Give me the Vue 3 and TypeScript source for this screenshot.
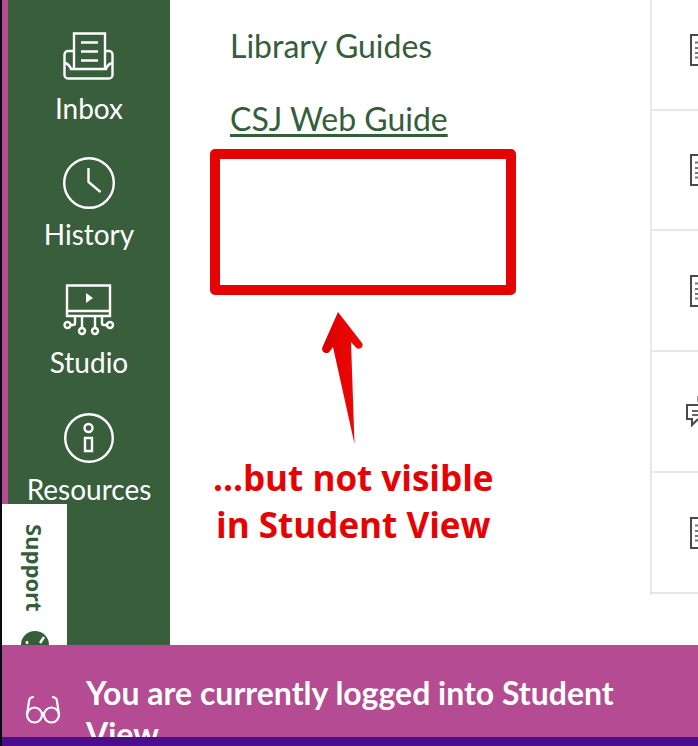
<script setup lang="ts">
const rows = ['doc', 'doc', 'doc', 'chat', 'doc']
</script>

<template>
  <div class="page">
    <div class="main">
      <div class="accent"></div>
      <nav class="nav">
        <a class="nav-item inbox">
          <svg width="52" height="48" viewBox="0 0 52 48" fill="none" stroke="#fff" stroke-width="2.4">
            <path d="M10 19H5a3.500 3.500 0 0 0-3.500 3.500V43A3.500 3.500 0 0 0 5 46.500h41a3.500 3.500 0 0 0 3.500-3.500V22.500A3.500 3.500 0 0 0 46 19h-4" />
            <path d="M2 31c3 1 5 3 6 6h35c1-3 3-5 6-6" />
            <path d="M11 37V1.500h31V37" />
            <path d="M18 10.500h17M18 19.500h17M18 28.500h17" />
          </svg>
          <span>Inbox</span>
        </a>
        <a class="nav-item history">
          <svg width="52" height="52" viewBox="0 0 52 52" fill="none" stroke="#fff" stroke-width="2.4">
            <circle cx="26" cy="26" r="24.800" />
            <path d="M25.500 11v14l12 10" />
          </svg>
          <span>History</span>
        </a>
        <a class="nav-item studio">
          <svg width="52" height="52" viewBox="0 0 52 52" fill="none" stroke="#fff" stroke-width="2.4">
            <path d="M4 1.500h43V32H4zM4 27h43" />
            <path d="M23 9l7 5-7 5z" fill="#fff" stroke="none" />
            <path d="M12 32v7a2 2 0 0 1-2 2H8M19 32v11M32 32v11M39 32v7a2 2 0 0 0 2 2h3" />
            <circle cx="4.500" cy="41" r="3" />
            <circle cx="19" cy="47" r="3" />
            <circle cx="32" cy="47" r="3" />
            <circle cx="47" cy="41" r="3" />
          </svg>
          <span>Studio</span>
        </a>
        <a class="nav-item resources">
          <svg width="50" height="50" viewBox="0 0 50 50" fill="none" stroke="#fff" stroke-width="2.4">
            <circle cx="25" cy="25" r="23.800" />
            <circle cx="24.500" cy="15" r="4" />
            <path d="M21 25h7v13h-7z" />
          </svg>
          <span>Resources</span>
        </a>
      </nav>
      <section class="content">
        <a class="guide-title">Library Guides</a>
        <a class="guide-link">CSJ Web Guide</a>
        <div class="red-box"></div>
        <svg class="arrow" width="46" height="134" viewBox="0 0 46 134">
          <defs>
            <linearGradient id="arrow-fill" x1="0" x2="1" y1="0" y2="0">
              <stop offset="0" stop-color="#d90000" />
              <stop offset="1" stop-color="#f20808" />
            </linearGradient>
          </defs>
          <path d="M18 2L42 33a4 4 0 0 1-1 5 4 4 0 0 1-5-.500L31 32 34.500 134 13 37 10 41a4 4 0 0 1-5.500 1.500A4 4 0 0 1 2.500 37z" fill="url(#arrow-fill)" />
        </svg>
        <p class="note">...but not visible<br />in Student View</p>
      </section>
      <aside class="list">
        <div v-for="(row, i) in rows" :key="i" class="list-row">
          <svg v-if="row === 'doc'" width="8" height="32" viewBox="0 0 8 32" fill="none">
            <path d="M8 1H1v30h7" stroke="#4a4a4a" stroke-width="2" />
            <path d="M5 8.500h3M5 14h3M5 19h3M5 23.500h3" stroke="#777" stroke-width="2" />
          </svg>
          <svg v-else width="12" height="32" viewBox="0 0 12 32" fill="none">
            <path d="M11.500 0v6" stroke="#999" />
            <path d="M12 9H1v14h5v6l6-6" stroke="#4a4a4a" stroke-width="2" />
            <path d="M6 15h6M6 19h6" stroke="#666" stroke-width="2" />
          </svg>
        </div>
      </aside>
      <div class="support">
        <span class="support-text">Support</span>
        <span class="support-icon">
          <svg width="28" height="14" viewBox="0 0 28 14" fill="none" stroke="#fff" stroke-width="2.500">
            <path d="M6 13v-3M19 12l4-6" />
          </svg>
        </span>
      </div>
    </div>
    <footer class="banner">
      <svg class="glasses" width="36" height="30" viewBox="0 0 36 30" fill="none" stroke="#fff" stroke-width="2.2">
        <circle cx="9.500" cy="20" r="7.500" />
        <circle cx="26.500" cy="20" r="7.500" />
        <path d="M17 19c.5-1 1.500-1 2 0" />
        <path d="M2 20L4 6c.3-2.500 2-4 5-4M34 20L32 6c-.3-2.500-2-4-5-4" />
      </svg>
      <p class="banner-text">You are currently logged into Student View</p>
    </footer>
    <div class="bottom-bar"></div>
  </div>
</template>

<style scoped>
.page {
  position: relative;
  display: flex;
  flex-direction: column;
  width: 698px;
  height: 746px;
  overflow: hidden;
  background: #fff;
  border-left: 2px solid #0a0a14;
  box-sizing: border-box;
  font-family: Lato, sans-serif;
}

.main {
  position: relative;
  display: flex;
  height: 645px;
  flex: none;
}

.accent {
  width: 6px;
  background: #b54b92;
}

.nav {
  display: flex;
  flex-direction: column;
  align-items: center;
  width: 162px;
  background: #385e3c;
  color: #fff;
  font-size: 28px;
  line-height: 32px;
}

.nav-item {
  display: flex;
  flex-direction: column;
  align-items: center;
}

.inbox { margin-top: 32px; }
.inbox span { margin-top: 12px; }
.history { margin-top: 33px; }
.history span { margin-top: 9px; }
.studio { margin-top: 34px; }
.studio span { margin-top: 10px; }
.resources { margin-top: 35px; }
.resources span { margin-top: 10px; }

.content {
  display: flex;
  flex-direction: column;
  align-items: flex-start;
  width: 480px;
  padding-left: 40px;
  box-sizing: border-box;
  color: #345d3a;
  font-size: 32px;
  line-height: 36px;
}

.guide-title { margin-top: 28px; margin-left: 20px; }
.guide-link {
  margin-top: 37px;
  margin-left: 20px;
  text-decoration: underline;
  text-decoration-thickness: 3px;
  text-underline-offset: 3px;
}

.red-box {
  width: 306px;
  height: 146px;
  margin-top: 12px;
  box-sizing: border-box;
  border: 10px solid #e60303;
  border-radius: 5px;
}

.arrow {
  margin-top: 15px;
  margin-left: 110px;
}

.note {
  margin: 10px 0 0 3px;
  color: #e60303;
  font-family: "Open Sans", sans-serif;
  font-size: 35px;
  font-weight: 700;
  line-height: 47px;
  text-align: center;
}

.list {
  width: 48px;
  height: 595px;
  border-left: 2px solid #e8e8e8;
  box-sizing: border-box;
}

.list-row {
  display: flex;
  align-items: center;
  justify-content: flex-end;
  height: 121px;
  border-bottom: 2px solid #e8e8e8;
  box-sizing: border-box;
}

.list-row:first-child { height: 111px; padding-bottom: 10px; }
.list-row:nth-child(2) { height: 120px; }

.support {
  position: absolute;
  left: 0;
  top: 504px;
  display: flex;
  flex-direction: column;
  align-items: center;
  width: 65px;
  height: 141px;
  overflow: hidden;
  background: #fff;
  color: #345d3a;
}

.support-text {
  flex: none;
  margin-top: 20px;
  writing-mode: vertical-rl;
  font-family: "Open Sans", sans-serif;
  font-size: 22px;
  font-weight: 700;
  line-height: 24px;
}

.support-icon {
  flex: none;
  width: 28px;
  height: 28px;
  margin-top: 19px;
  border-radius: 50%;
  background: #345d3a;
}

.support-icon svg {
  display: block;
}

.banner {
  display: flex;
  align-items: flex-start;
  height: 92px;
  flex: none;
  overflow: hidden;
  padding-left: 23px;
  box-sizing: border-box;
  background: #b54b92;
  color: #fff;
}

.glasses {
  flex: none;
  margin-top: 50px;
}

.banner-text {
  width: 570px;
  margin: 27px 0 0 25px;
  font-size: 32px;
  font-weight: 700;
  line-height: 41px;
}

.bottom-bar {
  height: 9px;
  background: #4b0d8b;
}
</style>
